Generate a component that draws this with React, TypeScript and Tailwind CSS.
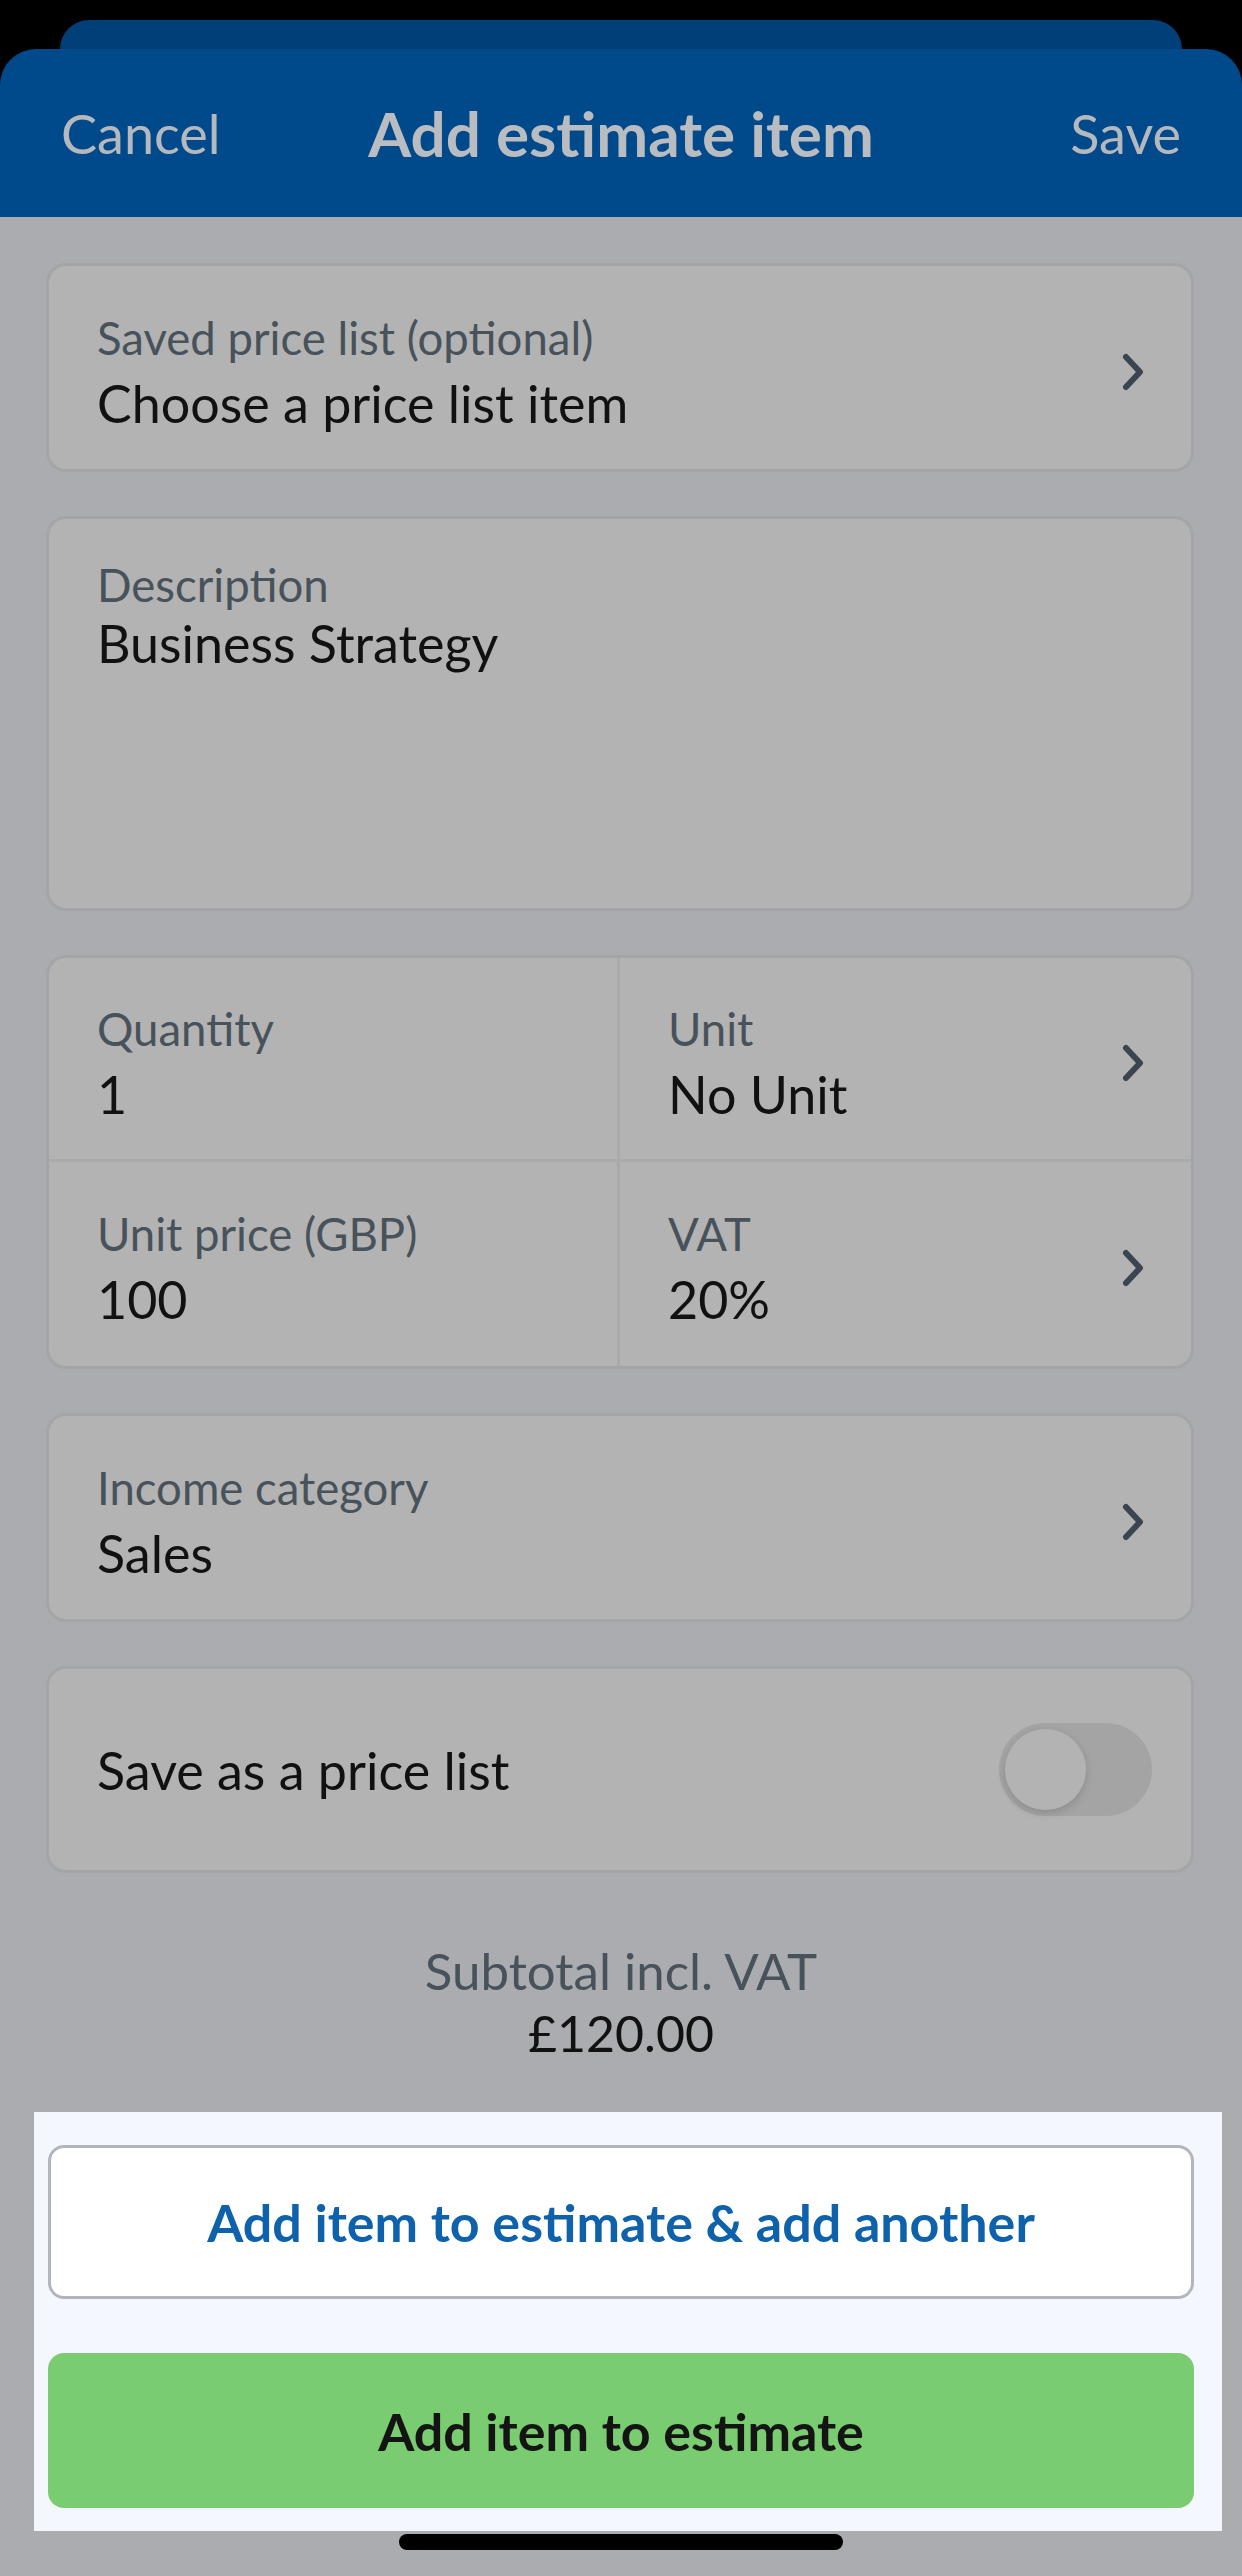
import React from "react";

const FONT = { fontFamily: "Lato, 'Noto Sans', sans-serif" };

function Chevron() {
  return (
    <svg width="26" height="40" viewBox="0 0 26 40" className="shrink-0">
      <path d="M5 5 L19 20 L5 35" fill="none" stroke="#3b4550" strokeWidth="6" strokeLinecap="round" strokeLinejoin="round" />
    </svg>
  );
}

function Field({ label, value }: { label: string; value: string }) {
  return (
    <div className="flex flex-col">
      <div className="text-[45.5px] leading-[56px] text-[#48525a]">{label}</div>
      <div className="mt-[6px] text-[52px] leading-[62px] text-[#111111]">{value}</div>
    </div>
  );
}

export default function App() {
  return (
    <div style={FONT} className="relative w-[1242px] h-[2576px] bg-[#abacb0] flex flex-col overflow-hidden">
      <div className="bg-black flex flex-col">
        <div className="h-[49px] px-[60px] pt-[20px]">
          <div className="h-full bg-[#003f78] rounded-t-[30px]" />
        </div>
        <div className="h-[168px] bg-[#00498a] rounded-t-[36px] grid grid-cols-[1fr_auto_1fr] items-center px-[61px]">
          <div className="text-[54px] text-[#b5b9bd] justify-self-start">Cancel</div>
          <div className="text-[62px] font-bold text-[#b9bcc0]">Add estimate item</div>
          <div className="text-[54px] text-[#b5b9bd] justify-self-end">Save</div>
        </div>
      </div>

      <div className="flex flex-col pl-[46px] pr-[48px] pt-[46px] gap-[44px]">
        <div className="h-[209px] rounded-[20px] border-[3px] border-[#a4a5a7] bg-[#b3b3b3] flex items-center justify-between pl-[48px] pr-[44px] pt-[8px]">
          <Field label="Saved price list (optional)" value="Choose a price list item" />
          <Chevron />
        </div>

        <div className="h-[395px] rounded-[20px] border-[3px] border-[#a4a5a7] bg-[#b3b3b3] pl-[48px] pt-[38px]">
          <div className="text-[45.5px] leading-[56px] text-[#48525a]">Description</div>
          <div className="text-[52px] leading-[60px] text-[#111111]">Business Strategy</div>
        </div>

        <div className="h-[414px] rounded-[20px] border-[3px] border-[#a4a5a7] bg-[#b3b3b3] grid grid-cols-2 grid-rows-2 overflow-hidden">
          <div className="flex items-center pl-[48px] pt-[8px] border-r-[3px] border-b-[3px] border-[#a9aaac]">
            <Field label="Quantity" value="1" />
          </div>
          <div className="flex items-center justify-between pl-[48px] pr-[44px] pt-[8px] border-b-[3px] border-[#a9aaac]">
            <Field label="Unit" value="No Unit" />
            <Chevron />
          </div>
          <div className="flex items-center pl-[48px] pt-[8px] border-r-[3px] border-[#a9aaac]">
            <Field label="Unit price (GBP)" value="100" />
          </div>
          <div className="flex items-center justify-between pl-[48px] pr-[44px] pt-[8px]">
            <Field label="VAT" value="20%" />
            <Chevron />
          </div>
        </div>

        <div className="h-[209px] rounded-[20px] border-[3px] border-[#a4a5a7] bg-[#b3b3b3] flex items-center justify-between pl-[48px] pr-[44px] pt-[8px]">
          <Field label="Income category" value="Sales" />
          <Chevron />
        </div>

        <div className="h-[207px] rounded-[20px] border-[3px] border-[#a4a5a7] bg-[#b3b3b3] flex items-center justify-between pl-[48px] pr-[39px]">
          <div className="text-[52px] text-[#111111]">Save as a price list</div>
          <div className="relative w-[153px] h-[93px] rounded-full bg-[#a4a4a4]">
            <div className="absolute left-[6px] top-[6px] w-[81px] h-[81px] rounded-full bg-[#b3b3b3] shadow-[0_3px_8px_rgba(0,0,0,0.15)]" />
          </div>
        </div>
      </div>

      <div className="flex flex-col items-center mt-[67px]">
        <div className="text-[51px] leading-[62px] text-[#48525a]">Subtotal incl. VAT</div>
        <div className="text-[50px] leading-[62px] text-[#111111]">£120.00</div>
      </div>

      <div className="mt-[48px] ml-[34px] mr-[20px] bg-[#f4f7fd] pl-[14px] pr-[28px] pt-[33px] pb-[23px] flex flex-col gap-[54px]">
        <div className="h-[154px] rounded-[16px] border-[3px] border-[#b1b5bc] bg-white flex items-center justify-center">
          <span className="text-[52px] font-bold text-[#0e62ab]">Add item to estimate &amp; add another</span>
        </div>
        <div className="h-[155px] rounded-[16px] bg-[#79cc6f] flex items-center justify-center">
          <span className="text-[52px] font-bold text-[#141414]">Add item to estimate</span>
        </div>
      </div>

      <div className="mt-[3px] flex justify-center">
        <div className="w-[444px] h-[16px] rounded-full bg-black" />
      </div>
    </div>
  );
}
